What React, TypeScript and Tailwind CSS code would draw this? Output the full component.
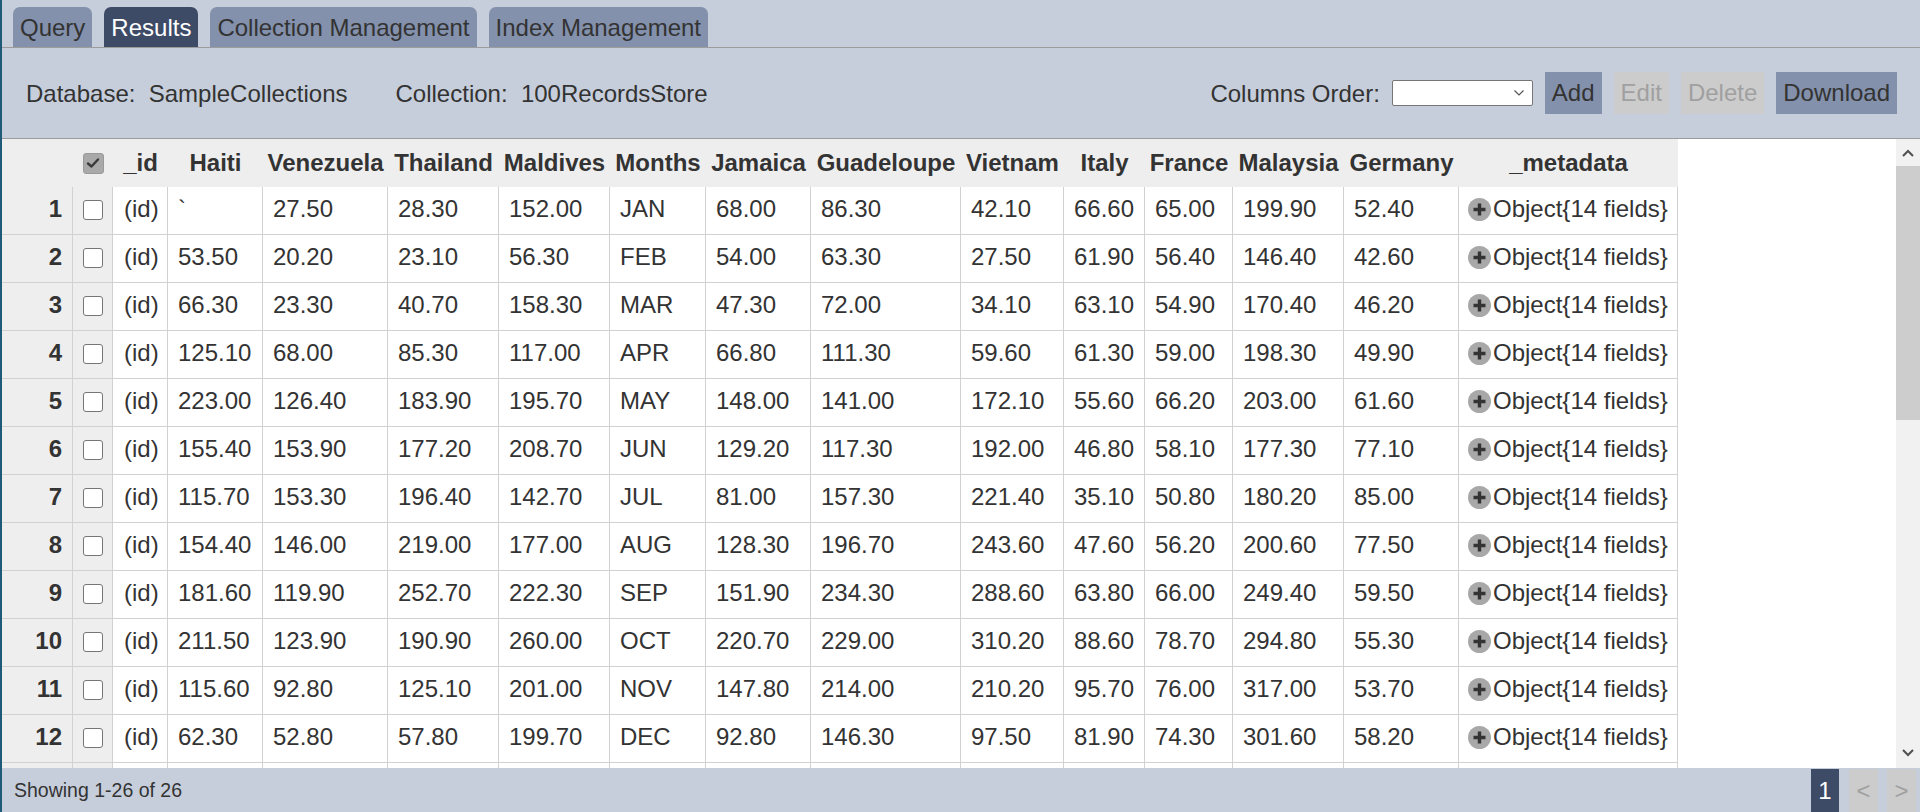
import React from "react";

const rows: string[][] = [
  ["`", "27.50", "28.30", "152.00", "JAN", "68.00", "86.30", "42.10", "66.60", "65.00", "199.90", "52.40"],
  ["53.50", "20.20", "23.10", "56.30", "FEB", "54.00", "63.30", "27.50", "61.90", "56.40", "146.40", "42.60"],
  ["66.30", "23.30", "40.70", "158.30", "MAR", "47.30", "72.00", "34.10", "63.10", "54.90", "170.40", "46.20"],
  ["125.10", "68.00", "85.30", "117.00", "APR", "66.80", "111.30", "59.60", "61.30", "59.00", "198.30", "49.90"],
  ["223.00", "126.40", "183.90", "195.70", "MAY", "148.00", "141.00", "172.10", "55.60", "66.20", "203.00", "61.60"],
  ["155.40", "153.90", "177.20", "208.70", "JUN", "129.20", "117.30", "192.00", "46.80", "58.10", "177.30", "77.10"],
  ["115.70", "153.30", "196.40", "142.70", "JUL", "81.00", "157.30", "221.40", "35.10", "50.80", "180.20", "85.00"],
  ["154.40", "146.00", "219.00", "177.00", "AUG", "128.30", "196.70", "243.60", "47.60", "56.20", "200.60", "77.50"],
  ["181.60", "119.90", "252.70", "222.30", "SEP", "151.90", "234.30", "288.60", "63.80", "66.00", "249.40", "59.50"],
  ["211.50", "123.90", "190.90", "260.00", "OCT", "220.70", "229.00", "310.20", "88.60", "78.70", "294.80", "55.30"],
  ["115.60", "92.80", "125.10", "201.00", "NOV", "147.80", "214.00", "210.20", "95.70", "76.00", "317.00", "53.70"],
  ["62.30", "52.80", "57.80", "199.70", "DEC", "92.80", "146.30", "97.50", "81.90", "74.30", "301.60", "58.20"],
];

const headers = ["Haiti", "Venezuela", "Thailand", "Maldives", "Months", "Jamaica", "Guadeloupe", "Vietnam", "Italy", "France", "Malaysia", "Germany"];

const gridCols =
  "grid grid-cols-[71px_40px_55px_95px_125px_111px_111px_96px_105px_150px_103px_81px_88px_111px_115px_219px] w-[1676px]";

function Checkbox() {
  return <div className="w-[20px] h-[20px] border border-[#767676] rounded-[3px] bg-white" />;
}

function CheckedBox() {
  return (
    <div className="w-[21px] h-[21px] rounded-[3px] bg-[#a9a9a9] border border-[#9a9a9a] flex items-center justify-center">
      <svg width="14" height="12" viewBox="0 0 14 12">
        <path d="M2 6.5 L5.5 9.5 L12 2.5" fill="none" stroke="#3a3a3a" strokeWidth="2.4" strokeLinecap="round" strokeLinejoin="round" />
      </svg>
    </div>
  );
}

function PlusIcon() {
  return (
    <svg width="23" height="23" viewBox="0 0 23 23" className="shrink-0">
      <circle cx="11.5" cy="11.5" r="11.5" fill="#a8a8a8" />
      <path d="M11.5 5.5 V17.5 M5.5 11.5 H17.5" stroke="#333" strokeWidth="3.4" />
    </svg>
  );
}

function Tab({ label, active }: { label: string; active?: boolean }) {
  return (
    <div
      className={
        active
          ? "h-[40px] px-[7px] rounded-t-[7px] bg-[#3e4b67] text-white leading-[42px]"
          : "h-[40px] px-[7px] rounded-t-[7px] bg-[#8391ac] text-[#333] leading-[42px]"
      }
    >
      {label}
    </div>
  );
}

export default function App() {
  return (
    <div
      className="w-full h-[812px] flex flex-col bg-[#c6cedb] border-l-2 border-[#1f5a78] text-[24px] text-[#333] overflow-hidden"
      style={{ fontFamily: '"Liberation Sans", Arial, sans-serif' }}
    >
      {/* Tabs */}
      <div className="h-[48px] shrink-0 flex items-end gap-[12px] pl-[11px] border-b border-[#9c9c9c]">
        <Tab label="Query" />
        <Tab label="Results" active />
        <Tab label="Collection Management" />
        <Tab label="Index Management" />
      </div>

      {/* Info bar */}
      <div className="h-[91px] shrink-0 flex items-center justify-between pl-[24px] pr-[23px] border-b border-[#9c9c9c]">
        <div className="flex items-center gap-[48px] whitespace-pre pt-[2px]">
          <span>{"Database:  SampleCollections"}</span>
          <span>{"Collection:  100RecordsStore"}</span>
        </div>
        <div className="flex items-center">
          <span className="pt-[2px]">Columns Order:</span>
          <div className="ml-[12px] w-[141px] h-[26px] bg-white border border-[#767676] rounded-[2px] flex items-center justify-end pr-[8px]">
            <svg width="10" height="6" viewBox="0 0 10 6">
              <path d="M0.5 0.5 L5 5 L9.5 0.5" fill="none" stroke="#555" strokeWidth="1.2" />
            </svg>
          </div>
          <div className="ml-[12px] flex items-center gap-[12px]">
            <div className="h-[42px] px-[7px] flex items-center bg-[#8391ac] text-[#333]">Add</div>
            <div className="h-[42px] px-[7px] flex items-center bg-[#cccccc] text-[#a0a0a0]">Edit</div>
            <div className="h-[42px] px-[7px] flex items-center bg-[#cccccc] text-[#a0a0a0]">Delete</div>
            <div className="h-[42px] px-[7px] flex items-center bg-[#8391ac] text-[#333]">Download</div>
          </div>
        </div>
      </div>

      {/* Table area */}
      <div className="flex-1 min-h-0 flex">
        <div className="flex-1 min-w-0 bg-white overflow-hidden">
          <div className={gridCols + " h-[48px] bg-[#eeeeee] font-bold"}>
            <div />
            <div className="flex items-center justify-center">
              <CheckedBox />
            </div>
            <div className="flex items-center justify-center">_id</div>
            {headers.map((h) => (
              <div key={h} className="flex items-center justify-center whitespace-nowrap">
                {h}
              </div>
            ))}
            <div className="flex items-center justify-center">_metadata</div>
          </div>
          {rows.map((r, i) => (
            <div key={i} className={gridCols + " h-[48px]"}>
              <div className="bg-[#eeeeee] border-b border-r border-[#d2d2d2] flex items-center justify-end pr-[10px] pb-[3px] font-bold">
                {i + 1}
              </div>
              <div className="bg-[#eeeeee] border-b border-r border-[#d2d2d2] flex items-center justify-center pl-[1px] pb-[2px]">
                <Checkbox />
              </div>
              <div className="border-b border-r border-[#d2d2d2] flex items-center pl-[11px] pb-[3px]">(id)</div>
              {r.map((v, j) => (
                <div key={j} className="border-b border-r border-[#d2d2d2] flex items-center pl-[10px] pb-[3px] whitespace-nowrap">
                  {v}
                </div>
              ))}
              <div className="border-b border-r border-[#d2d2d2] flex items-center pl-[9px] pb-[3px] gap-[2px] whitespace-nowrap">
                <PlusIcon />
                <span>{"Object{14 fields}"}</span>
              </div>
            </div>
          ))}
          <div className={gridCols + " h-[48px]"}>
            <div className="bg-[#eeeeee] border-r border-[#d2d2d2]" />
            <div className="bg-[#eeeeee] border-r border-[#d2d2d2]" />
            {Array.from({ length: 14 }).map((_, k) => (
              <div key={k} className="border-r border-[#d2d2d2]" />
            ))}
          </div>
        </div>
        {/* Scrollbar */}
        <div className="w-[24px] shrink-0 bg-[#f1f1f1] flex flex-col">
          <div className="h-[27px] flex items-center justify-center">
            <svg width="12" height="8" viewBox="0 0 12 8">
              <path d="M1 7 L6 2 L11 7" fill="none" stroke="#505050" strokeWidth="2" />
            </svg>
          </div>
          <div className="h-[254px] bg-[#cdcdcd]" />
          <div className="flex-1" />
          <div className="h-[30px] flex items-center justify-center">
            <svg width="12" height="8" viewBox="0 0 12 8">
              <path d="M1 1 L6 6 L11 1" fill="none" stroke="#505050" strokeWidth="2" />
            </svg>
          </div>
        </div>
      </div>

      {/* Footer */}
      <div className="h-[44px] shrink-0 flex items-stretch justify-between pt-[1px] pl-[12px] pr-[4px]">
        <div className="self-center text-[19.5px]">Showing 1-26 of 26</div>
        <div className="flex items-stretch">
          <div className="w-[28px] bg-[#3e4b67] text-white flex items-center justify-center">1</div>
          <div className="ml-[10px] w-[29px] bg-[#cccccc] text-[#a0a0a0] flex items-center justify-center">&lt;</div>
          <div className="ml-[9px] w-[29px] bg-[#cccccc] text-[#a0a0a0] flex items-center justify-center">&gt;</div>
        </div>
      </div>
    </div>
  );
}
